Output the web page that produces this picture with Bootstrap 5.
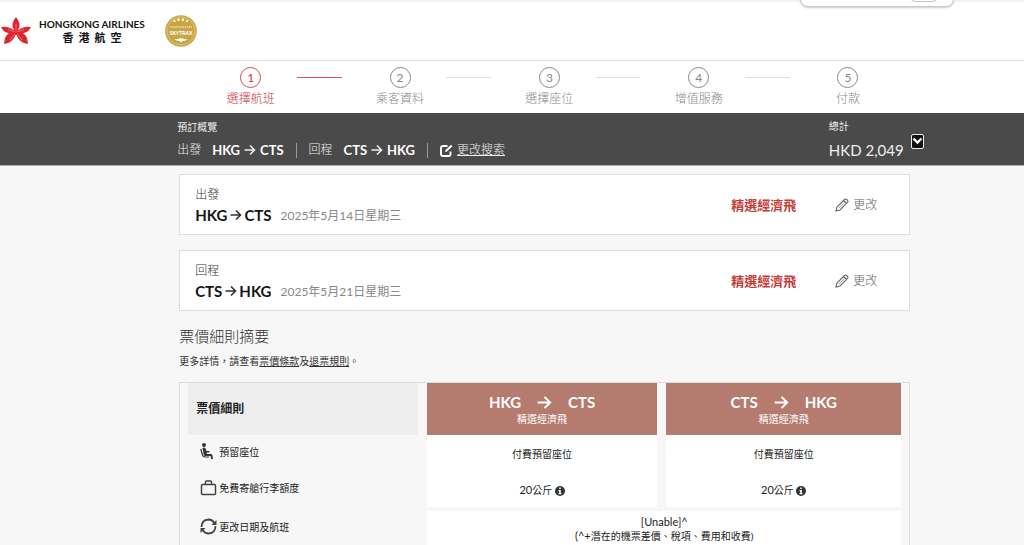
<!DOCTYPE html>
<html lang="zh-Hant">
<head>
<meta charset="utf-8">
<meta name="viewport" content="width=device-width, initial-scale=1">
<title>香港航空 - 選擇航班</title>
<link href="https://cdn.jsdelivr.net/npm/bootstrap@5.3.0/dist/css/bootstrap.min.css" rel="stylesheet">
<style>
  body { font-family: Lato, "Noto Sans CJK TC", sans-serif; font-size: 12px; line-height: 16px; color: #333; background: #f7f7f7; overflow-x: hidden; }
  a, a:hover { color: inherit; }
  svg { flex: none; display: block; }
  .thin { font-weight: 300; }
  .fs-10 { font-size: 10px; }
  .site-header { height: 61px; border-top: 2px solid #f3f3f3; border-bottom: 1px solid #ddd; background: #fff; padding-left: 1px; gap: 20px; }
  .brand-en { font-size: 10px; line-height: 14px; font-weight: 700; color: #151515; }
  .brand-zh { font-size: 11px; line-height: 14px; font-weight: 700; color: #151515; gap: 5px; }
  .browser-tip { position: absolute; top: -24px; right: 70px; width: 154px; height: 29px; background: #fff; border: 1px solid #ccc; border-radius: 8px; box-shadow: 0 1px 2px #ccc; }
  .browser-tip span { position: absolute; right: 13px; bottom: 4px; width: 32px; height: 20px; border: 1px solid #b9c9d8; border-radius: 8px; }
  .steps { height: 52px; background: #fff; color: #888; padding: 6px 9.9% 0 17.2%; }
  .stepper { display: grid; grid-template-columns: repeat(5, 20%); }
  .step-no { width: 21px; height: 21px; border: 1px solid #888; border-radius: 50%; line-height: 19px; }
  .step-label { line-height: 22px; font-weight: 300; }
  .stepper li { position: relative; }
  .stepper li:not(:last-child)::after { content: ""; position: absolute; left: 81%; width: 30%; top: 10px; height: 1px; background: #ddd; }
  .stepper li.current { color: #c9363b; }
  .stepper li.current .step-no { border-color: #cf4a4e; }
  .stepper li.current:not(:last-child)::after { background: #d0585b; }
  .summary { background: #4a4a4a; color: #eee; height: 53px; border-bottom: 1px solid #aaa; padding: 6px 9.8% 0 17.3%; }
  .summary b { font-size: 13px; color: #fff; }
  .itinerary { margin-top: 7px; }
  .leg-label { margin-right: 11px; }
  .go { margin: 0 4px; }
  .bar { width: 1px; height: 15px; background: #999; margin: 0 12px; }
  .total { font-size: 15px; line-height: 20px; margin-top: 7px; }
  .total-label { line-height: 14px; }
  .toggle { width: 13px; height: 15px; background: #111; border: 1px solid #eee; border-radius: 2px; padding: 0; margin: 15px 0 0 7px; }
  .page { padding: 8px 11.1% 0 17.5%; }
  .flight { background: #fff; border: 1px solid #ddd; height: 61px; padding: 0 32px 0 15px; margin-bottom: 15px; }
  .trip { padding-top: 5px; }
  .city { font-size: 15px; line-height: 24px; font-weight: 700; color: #151515; }
  .trip .go { margin: 0 2px 0 3px; }
  .date { color: #888; margin: 2px 0 0 9px; }
  .fare { font-size: 13px; font-weight: 700; color: #c23c38; margin-right: 39px; }
  .edit { border: 0; background: none; padding: 0; color: #666; font-weight: 300; }
  h2 { font-size: 15px; line-height: 20px; font-weight: 300; margin: 0 0 7px; color: #333; }
  .rules { border: 1px solid #ddd; border-bottom: 0; padding: 0 8px; margin-top: 13px; }
  .fares { width: 100%; table-layout: fixed; border-collapse: separate; border-spacing: 0; font-size: 10px; line-height: 14px; color: #222; }
  .fares th, .fares td { padding: 0; border-right: 9px solid #f7f7f7; }
  .fares tr > :last-child { border-right: 0; }
  .fares thead th { height: 52px; font-weight: 400; }
  .fares thead th:first-child { background: #eee; font-size: 12px; font-weight: 700; padding-left: 8px; }
  .fares .route { background: #b57b6e; color: #fff; text-align: center; }
  .route b { font-size: 15px; line-height: 20px; }
  .fares tbody tr { height: 36px; }
  .fares tbody th { font-weight: 400; padding: 0 0 3px 12px; }
  .fares tbody td { background: #fff; text-align: center; font-weight: 400; padding-top: 2px; }
  .fares tbody tr.change { height: 39px; }
  .fares .change th { padding-bottom: 0; }
  .fares .change td { border-top: 4px solid #f7f7f7; line-height: 13px; padding-top: 0; }
  .ico { width: 19px; }
  .num { font-size: 11px; }
</style>
</head>
<body>
<svg class="d-none" aria-hidden="true">
  <symbol id="arrow" viewBox="0 0 12 12"><path d="M0.5 6h10M6 1.5L10.5 6L6 10.5" fill="none" stroke="currentColor" stroke-width="1.6"/></symbol>
  <symbol id="pencil" viewBox="0 0 14 14"><path d="M1 13l1-4L9.500 1.500q1.200-1 2.200 0l.8.8q.9 1 0 2L5 12zM8.500 2.500L11.500 5.500" fill="none" stroke="currentColor" stroke-width="1.100"/><path d="M4 10l5.500-5.500" stroke="currentColor" stroke-width=".6"/></symbol>
  <symbol id="info" viewBox="0 0 10 10"><circle cx="5" cy="5" r="5" fill="#333"/><path d="M4.200 1.500h1.600v1.500H4.200zM3.500 4h2.300v3h.7v1.200h-3V7h.7V5.200h-.7z" fill="#fff"/></symbol>
</svg>

<header class="site-header d-flex align-items-center position-relative">
  <a href="#" class="d-flex align-items-center text-decoration-none">
    <svg width="30" height="28" viewBox="0 0 30 28" fill="#df2630">
      <path d="M15 0q6 7 2 13h-4Q9 7 15 0z"/>
      <path d="M0 10q8-1 13 3.500l-.5 3.500Q3 17 0 10z"/>
      <path d="M30 10q-8-1-13 3.500l.5 3.500Q27 17 30 10z"/>
      <path d="M3 27Q3 17 12 14l3 3Q12 26 3 27z"/>
      <path d="M27 27q0-10-9-13l-3 3q3 9 12 10z"/>
      <circle cx="15" cy="15" r="3"/>
      <path d="M15 14V7M14 15L7 12.500M16 15l7-2.500M14 17l-5 6M16 17l5 6" stroke="#f9b5b5" stroke-width=".5"/>
    </svg>
    <span class="ms-2 d-flex flex-column align-items-center">
      <span class="brand-en">HONGKONG AIRLINES</span>
      <span class="brand-zh d-flex"><span>香</span><span>港</span><span>航</span><span>空</span></span>
    </span>
  </a>
  <svg width="32" height="32" viewBox="0 0 32 32">
    <circle cx="16" cy="16" r="15.800" fill="#c9a544"/><circle cx="16" cy="16" r="14" fill="none" stroke="#ead9a4" stroke-width=".6"/>
    <g fill="#fff"><circle cx="9.500" cy="6" r="1.100"/><circle cx="13.500" cy="4.800" r="1.200"/><circle cx="18" cy="4.800" r="1.200"/><circle cx="22" cy="6" r="1.100"/>
    <path d="M9 24q4 1 5.500-.8h3Q19 25 23 24q-3 2.500-5.500 2L16 27.500 14.500 26Q12 26.500 9 24z"/></g>
    <path d="M5 12h22" stroke="#ecdcae" stroke-width="1.400" stroke-dasharray="1.500 .6"/>
    <text x="16" y="20" text-anchor="middle" font-size="5" font-weight="900" fill="#fff">SKYTRAX</text>
  </svg>
  <div class="browser-tip"><span></span></div>
</header>

<nav class="steps">
  <ol class="stepper list-unstyled mb-0 text-center">
    <li class="current"><div class="step-no mx-auto">1</div><div class="step-label">選擇航班</div></li>
    <li><div class="step-no mx-auto">2</div><div class="step-label">乘客資料</div></li>
    <li><div class="step-no mx-auto">3</div><div class="step-label">選擇座位</div></li>
    <li><div class="step-no mx-auto">4</div><div class="step-label">增值服務</div></li>
    <li><div class="step-no mx-auto">5</div><div class="step-label">付款</div></li>
  </ol>
</nav>

<section class="summary d-flex justify-content-between">
  <div>
    <div class="fs-10">預訂概覽</div>
    <div class="itinerary d-flex align-items-center">
      <span class="thin leg-label">出發</span><b>HKG</b>
      <svg class="go" width="12" height="12"><use href="#arrow"/></svg><b>CTS</b>
      <span class="bar"></span>
      <span class="thin leg-label">回程</span><b>CTS</b>
      <svg class="go" width="12" height="12"><use href="#arrow"/></svg><b>HKG</b>
      <span class="bar"></span>
      <svg class="me-1" width="13" height="13" viewBox="0 0 13 13" fill="none" stroke="#fff" stroke-width="1.900"><path d="M7.500 2H3Q1 2 1 4v6q0 2 2 2h5.500q2 0 2-2V7.500"/><path d="M5 8l.5-2L11 .8 12.500 2.200 7 7.600z" fill="#fff" stroke="none"/></svg>
      <a href="#" class="thin">更改搜索</a>
    </div>
  </div>
  <div class="d-flex">
    <div><div class="fs-10 total-label">總計</div><div class="total">HKD 2,049</div></div>
    <button class="toggle" type="button" aria-label="展開"><svg width="11" height="11" viewBox="0 0 11 11"><path d="M1.500 2.500l4 4 4-4" fill="none" stroke="#fff" stroke-width="2.400"/></svg></button>
  </div>
</section>

<main class="page">
  <article class="flight d-flex align-items-center">
    <div class="trip flex-grow-1">
      <div class="thin">出發</div>
      <div class="d-flex align-items-center"><span class="city">HKG</span><svg class="go" width="12" height="12"><use href="#arrow"/></svg><span class="city">CTS</span><span class="date">2025年5月14日星期三</span></div>
    </div>
    <span class="fare">精選經濟飛</span>
    <button class="edit d-flex align-items-center gap-1" type="button"><svg width="14" height="14"><use href="#pencil"/></svg>更改</button>
  </article>
  <article class="flight d-flex align-items-center">
    <div class="trip flex-grow-1">
      <div class="thin">回程</div>
      <div class="d-flex align-items-center"><span class="city">CTS</span><svg class="go" width="12" height="12"><use href="#arrow"/></svg><span class="city">HKG</span><span class="date">2025年5月21日星期三</span></div>
    </div>
    <span class="fare">精選經濟飛</span>
    <button class="edit d-flex align-items-center gap-1" type="button"><svg width="14" height="14"><use href="#pencil"/></svg>更改</button>
  </article>

  <h2>票價細則摘要</h2>
  <p class="fs-10 mb-0">更多詳情，請查看<a href="#">票價條款</a>及<a href="#">退票規則</a>。</p>

  <div class="rules">
    <table class="fares">
      <colgroup><col style="width:33.5%"><col style="width:33.5%"><col></colgroup>
      <thead>
        <tr>
          <th scope="col">票價細則</th>
          <th scope="col" class="route"><div class="d-flex justify-content-center align-items-center gap-3"><b>HKG</b><svg width="15" height="15"><use href="#arrow"/></svg><b>CTS</b></div>精選經濟飛</th>
          <th scope="col" class="route"><div class="d-flex justify-content-center align-items-center gap-3"><b>CTS</b><svg width="15" height="15"><use href="#arrow"/></svg><b>HKG</b></div>精選經濟飛</th>
        </tr>
      </thead>
      <tbody>
        <tr>
          <th scope="row"><div class="d-flex align-items-center"><span class="ico"><svg width="14" height="17" viewBox="0 0 14 17"><circle cx="4" cy="2" r="2" fill="#333"/><path d="M2.500 5q2-1 3 .5L6.500 8h3v1.500H6.500L7 11h4q1 0 1.300 1l.7 4h-1.800l-.7-3H5.500q-1.500 0-1.800-1.500z" fill="#333"/><path d="M.8 6l1.700 6q.5 2 2.500 2h4" fill="none" stroke="#333" stroke-width="1.200"/></svg></span>預留座位</div></th>
          <td>付費預留座位</td><td>付費預留座位</td>
        </tr>
        <tr>
          <th scope="row"><div class="d-flex align-items-center"><span class="ico"><svg width="17" height="16" viewBox="0 0 17 16" fill="none" stroke="#444" stroke-width="1.500"><rect x="1.500" y="4.500" width="14" height="10" rx="1"/><path d="M5.500 4.500V2q0-1 1-1h4q1 0 1 1v2.500"/></svg></span>免費寄艙行李額度</div></th>
          <td><span class="num">20</span>公斤 <svg class="d-inline-block align-middle" width="10" height="10"><use href="#info"/></svg></td>
          <td><span class="num">20</span>公斤 <svg class="d-inline-block align-middle" width="10" height="10"><use href="#info"/></svg></td>
        </tr>
        <tr class="change">
          <th scope="row"><div class="d-flex align-items-center"><span class="ico"><svg width="17" height="17" viewBox="0 0 17 17"><path d="M1.500 9Q1.500 2 8.500 1.500q4 0 6 4M15.500 8q0 7-7 7.500-4 0-6-4" fill="none" stroke="#444" stroke-width="1.800"/><path d="M16.500 2v5h-5zM.5 15v-5h5z" fill="#444"/></svg></span>更改日期及航班</div></th>
          <td colspan="2"><span class="num">[Unable]^</span><br><span class="num">(^+</span>潛在的機票差價、稅項、費用和收費)</td>
        </tr>
      </tbody>
    </table>
  </div>
</main>
<script src="https://cdn.jsdelivr.net/npm/bootstrap@5.3.0/dist/js/bootstrap.bundle.min.js"></script>
</body>
</html>
